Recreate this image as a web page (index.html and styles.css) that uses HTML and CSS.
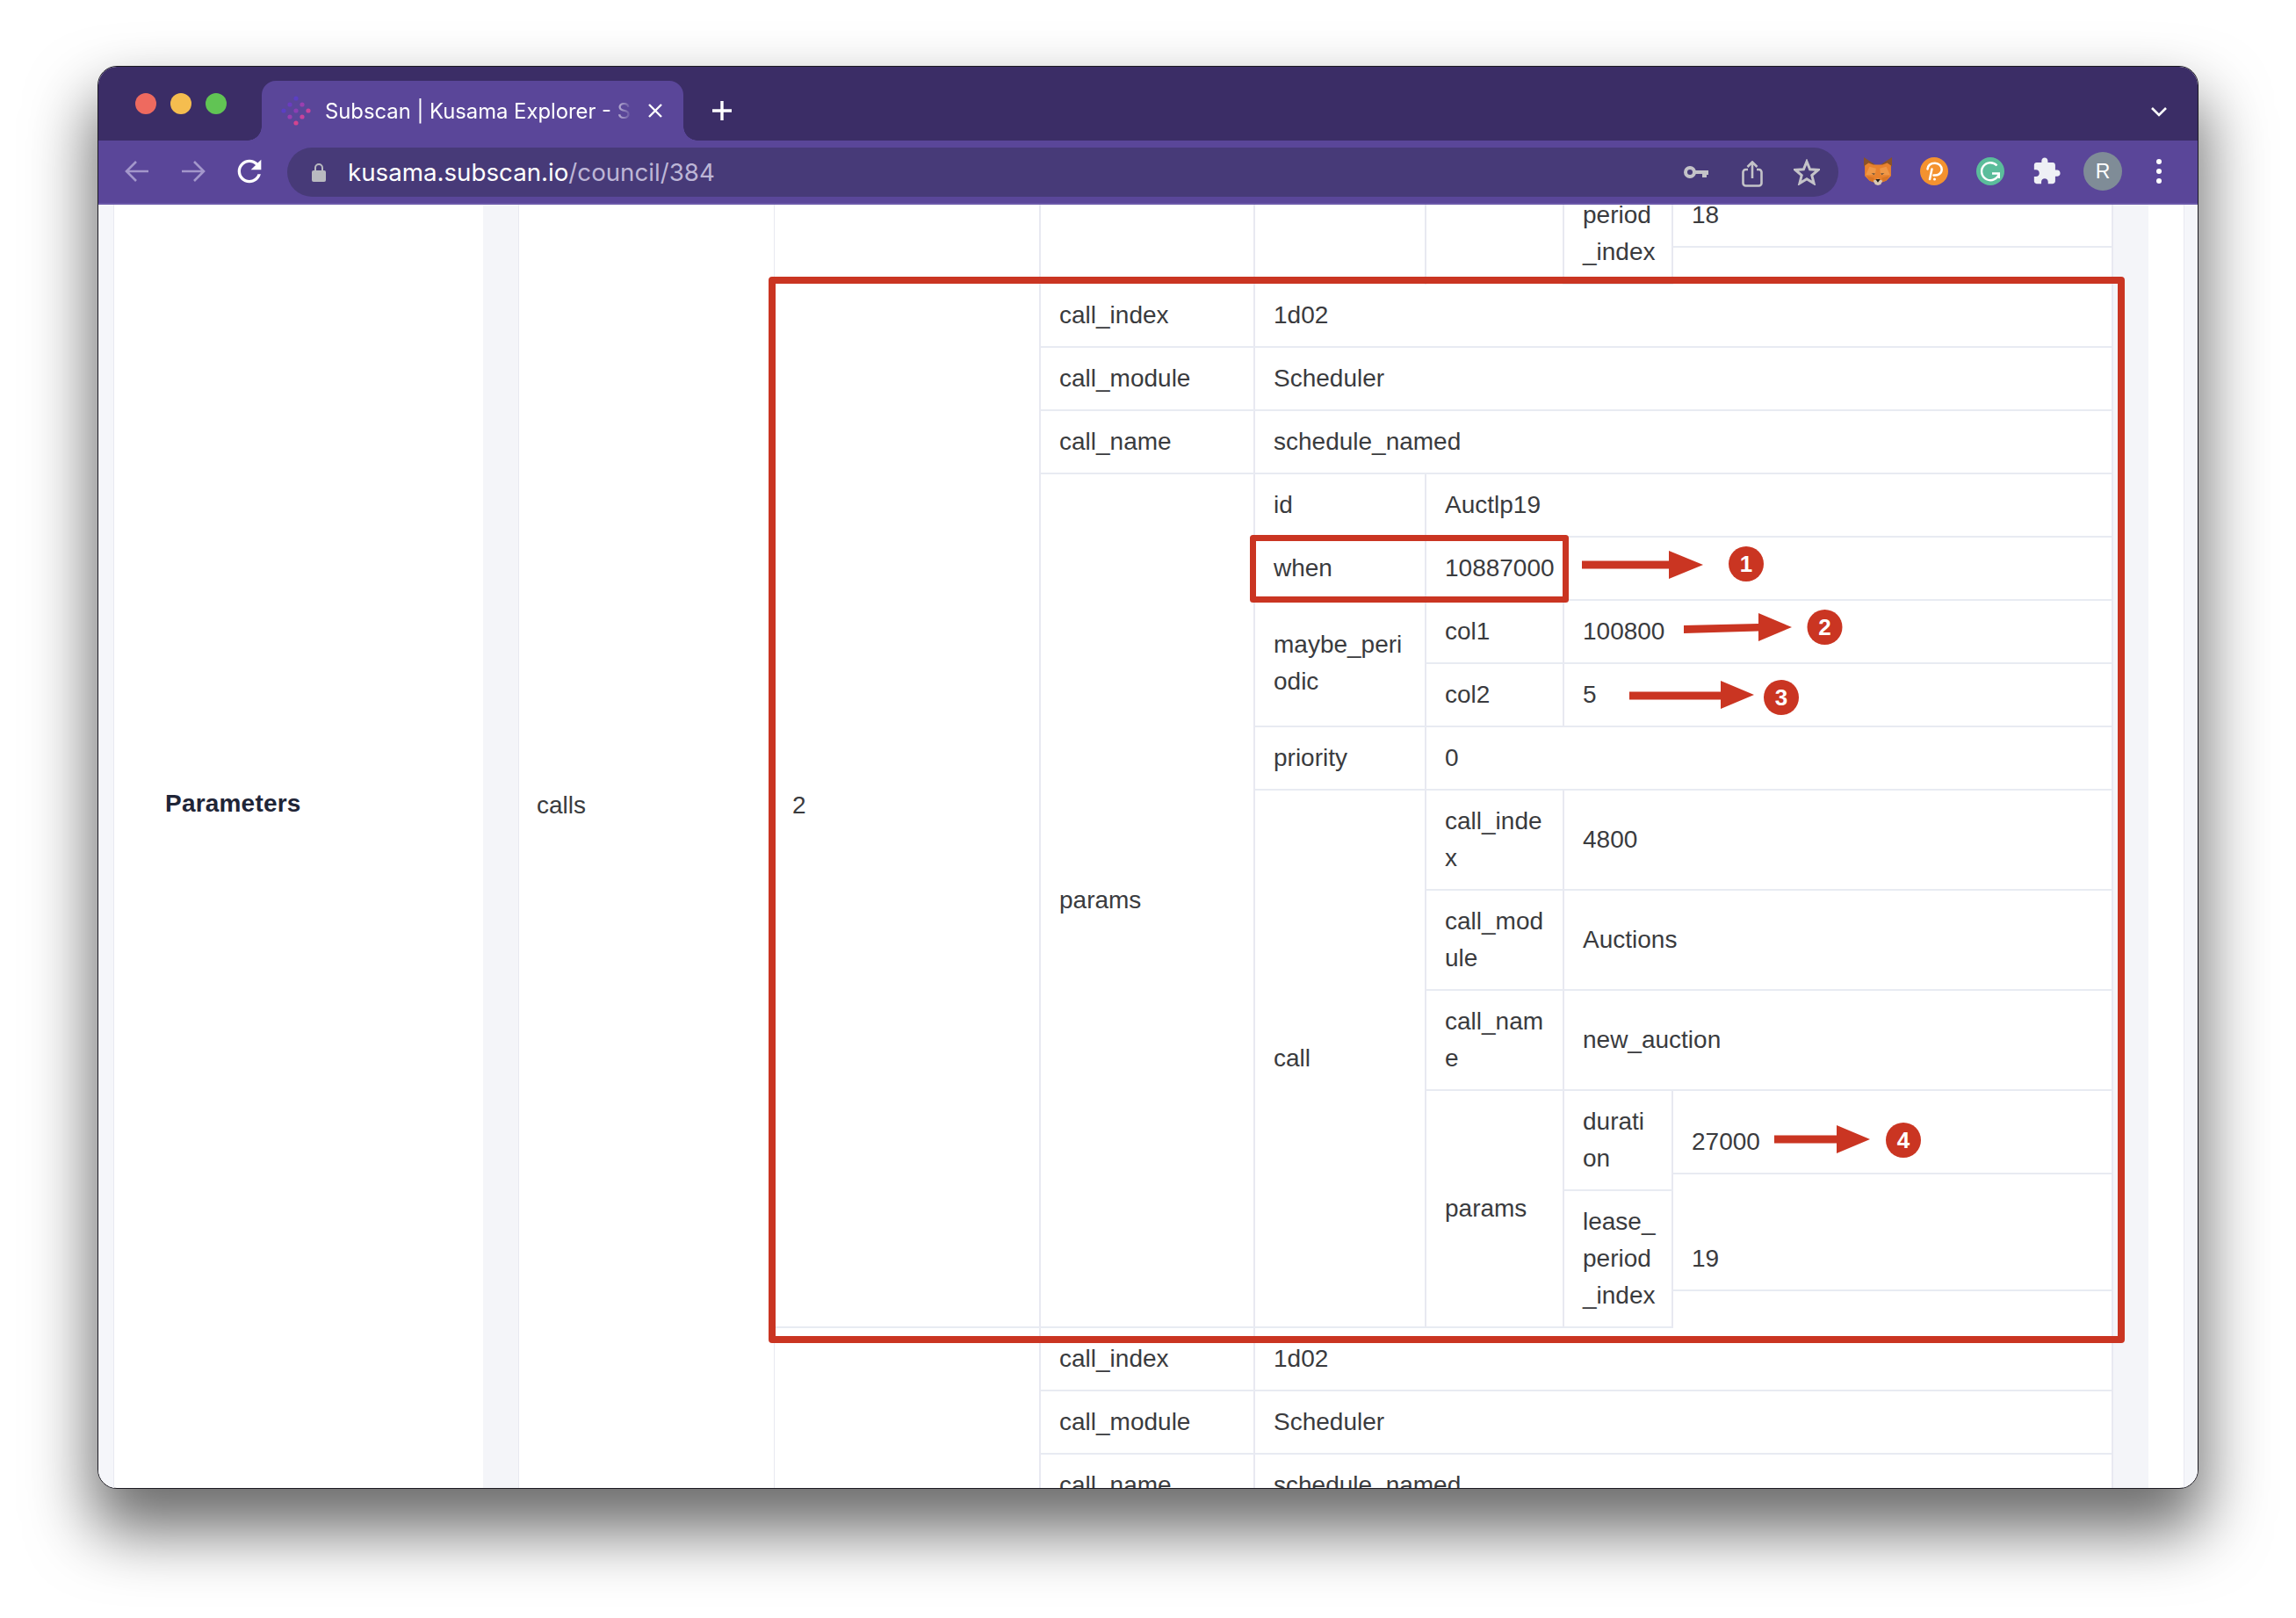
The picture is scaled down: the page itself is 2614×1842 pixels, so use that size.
FILE: index.html
```html
<!DOCTYPE html>
<html lang="en">
  <head>
    <meta charset="UTF-8" />
    <title>Subscan | Kusama Explorer</title>
    <link rel="stylesheet" href="styles.css">
  </head>
  <body>
    <div class="window">
      <header class="tabstrip">
        <div class="lights">
          <span class="light red"></span>
          <span class="light yellow"></span>
          <span class="light green"></span>
        </div>
        <div class="tab">
          <svg class="favicon" viewBox="0 0 34 34">
            <circle cx="17" cy="3" r="2.6" fill="#5b3fc4" />
            <circle cx="10" cy="10" r="2.6" fill="#6a3cc0" />
            <circle cx="24" cy="10" r="2.6" fill="#9a3fb0" />
            <circle cx="3" cy="17" r="2.6" fill="#5b3fc4" />
            <circle cx="17" cy="17" r="2.6" fill="#8a3fb4" />
            <circle cx="31" cy="17" r="2.6" fill="#c8439c" />
            <circle cx="10" cy="24" r="2.6" fill="#9a3fb0" />
            <circle cx="24" cy="24" r="2.6" fill="#c8439c" />
            <circle cx="17" cy="31" r="2.6" fill="#d2448f" />
          </svg>
          <span class="tab-title">Subscan | Kusama Explorer - Subscan</span>
          <svg class="tab-close" viewBox="0 0 18 18"><path d="M2 2 16 16M16 2 2 16" /></svg>
        </div>
        <svg class="new-tab" viewBox="0 0 24 24"><path d="M12 1V23M1 12H23" /></svg>
        <svg class="tab-menu" viewBox="0 0 20 12"><path d="M2 2 10 10 18 2" /></svg>
      </header>

      <div class="toolbar">
        <div class="slot">
          <svg class="nav dim" viewBox="0 0 28 28"><path d="M27 14H2M13 3 2 14 13 25" /></svg>
        </div>
        <div class="slot">
          <svg class="nav dim" viewBox="0 0 28 28"><path d="M1 14H26M15 3 26 14 15 25" /></svg>
        </div>
        <div class="slot">
          <svg class="reload" viewBox="0 0 24 24"><path d="M17.65 6.35C16.2 4.9 14.21 4 12 4c-4.42 0-7.99 3.58-7.99 8s3.57 8 7.99 8c3.73 0 6.84-2.55 7.73-6h-2.08c-.82 2.33-3.04 4-5.65 4-3.31 0-6-2.69-6-6s2.69-6 6-6c1.66 0 3.14.69 4.22 1.78L13 11h7V4l-2.35 2.35z" /></svg>
        </div>
        <div class="urlbar">
          <svg class="lock" viewBox="0 0 16 22">
            <path d="M4 10V6a4 4 0 0 1 8 0v4" fill="none" stroke="#b9bac0" stroke-width="2" />
            <rect x="0" y="9" width="16" height="13" rx="2" fill="#b9bac0" />
          </svg>
          <span class="url"><b>kusama.subscan.io</b>/council/384</span>
          <div class="url-icons">
            <svg class="key-icon" viewBox="0 0 28 14">
              <circle cx="7" cy="7" r="5" fill="none" stroke="#c4c3c8" stroke-width="4" />
              <path d="M12 5H28V10H26V13H21V9H12z" fill="#c4c3c8" />
            </svg>
            <svg class="share" viewBox="0 0 24 30">
              <path d="M7 10H4.500A3 3 0 0 0 1.500 13V25.500A3 3 0 0 0 4.500 28.500H19.500A3 3 0 0 0 22.500 25.500V13A3 3 0 0 0 19.500 10H17" />
              <path d="M12 20V2M6.500 7 12 1.500 17.500 7" />
            </svg>
            <svg class="star" viewBox="0 0 30 30"><path d="M15 3 18.600 11.700 28 12.400 20.800 18.500 23.100 27.700 15 22.700 6.900 27.700 9.200 18.500 2 12.400 11.400 11.700z" /></svg>
          </div>
        </div>
        <div class="extensions">
          <div class="slot">
            <svg class="ext" viewBox="0 0 30 30">
              <path d="M0 0 12 8 5 14 0 9z" fill="#8a5228" />
              <path d="M30 0 18 8 25 14 30 9z" fill="#8a5228" />
              <path d="M1 9 5 6 10 8H20L25 6 29 9 29 20 24 25 19 27H11L6 25 1 20z" fill="#e8822e" />
              <path d="M6 10 13 12 12 19 2 19z" fill="#ef9848" />
              <path d="M24 10 17 12 18 19 28 19z" fill="#ef9848" />
              <path d="M3 20 11 22 10 26 6 25z" fill="#d87526" />
              <path d="M27 20 19 22 20 26 24 25z" fill="#d87526" />
              <path d="M10 25 15 23 20 25 18 29 15 30 12 29z" fill="#d9c7b4" />
              <path d="M12.500 23.500H17.500L15 27z" fill="#1d1a18" />
              <path d="M8 17 12 17 11 19z" fill="#6b5138" />
              <path d="M22 17 18 17 19 19z" fill="#6b5138" />
            </svg>
          </div>
          <div class="slot">
            <svg class="ext" viewBox="0 0 32 32">
              <circle cx="16" cy="16" r="16" fill="#f4922f" />
              <path d="M8.500 13.500C9 9 12.500 6.700 17 6.700C21.500 6.700 24.700 10 24.700 14C24.700 18.500 20.500 21 15.500 20.500M13.500 13.500 11 25" fill="none" stroke="#fff" stroke-width="2.500" stroke-linecap="round" />
              <circle cx="16.500" cy="25" r="1.500" fill="#fff" />
            </svg>
          </div>
          <div class="slot">
            <svg class="ext" viewBox="0 0 32 32">
              <circle cx="16" cy="16" r="16" fill="#5bbd9b" />
              <path d="M23.500 9.500A10 10 0 1 0 25.800 18.500" fill="none" stroke="#fff" stroke-width="2.400" />
              <path d="M18 18.500H25.800V24" fill="none" stroke="#fff" stroke-width="2.400" />
            </svg>
          </div>
          <div class="slot">
            <svg class="puzzle" viewBox="0 0 24 24"><path d="M20.500 11H19V7c0-1.100-.9-2-2-2h-4V3.500C13 2.120 11.880 1 10.500 1S8 2.120 8 3.500V5H4c-1.100 0-1.990.9-1.990 2v3.800H3.500c1.490 0 2.700 1.210 2.700 2.700s-1.210 2.700-2.700 2.700H2V20c0 1.100.9 2 2 2h3.800v-1.500c0-1.490 1.210-2.700 2.700-2.700 1.490 0 2.700 1.210 2.700 2.700V22H17c1.100 0 2-.9 2-2v-4h1.500c1.380 0 2.500-1.120 2.500-2.500S21.880 11 20.500 11z" /></svg>
          </div>
          <div class="slot"><span class="avatar">R</span></div>
          <div class="slot">
            <svg class="dots" viewBox="0 0 8 30">
              <circle cx="4" cy="4" r="3" />
              <circle cx="4" cy="15" r="3" />
              <circle cx="4" cy="26" r="3" />
            </svg>
          </div>
        </div>
      </div>

      <main class="content">
        <div class="gutter"></div>
        <div class="label-col">Parameters</div>
        <div class="band"></div>
        <div class="calls-col">calls</div>

        <div class="calls-body">
          <div class="call call-top">
            <div class="key c1"></div>
            <div class="key ka"></div>
            <div class="key kb"></div>
            <div class="key kc"></div>
            <div class="split">
              <div class="split-keys">
                <div class="key">lease_<br />period<br />_index</div>
              </div>
              <div class="split-vals">
                <div class="val v-lease">18</div>
              </div>
            </div>
          </div>

          <div class="call">
            <div class="key c1">2</div>
            <div class="nest">
              <div class="row"><div class="key ka">call_index</div><div class="val">1d02</div></div>
              <div class="row"><div class="key ka">call_module</div><div class="val">Scheduler</div></div>
              <div class="row"><div class="key ka">call_name</div><div class="val">schedule_named</div></div>
              <div class="row">
                <div class="key ka">params</div>
                <div class="nest">
                  <div class="row"><div class="key kb">id</div><div class="val">Auctlp19</div></div>
                  <div class="row"><div class="key kb">when</div><div class="val">10887000</div></div>
                  <div class="row">
                    <div class="key kb">maybe_peri<br />odic</div>
                    <div class="nest">
                      <div class="row"><div class="key kc">col1</div><div class="val">100800</div></div>
                      <div class="row"><div class="key kc">col2</div><div class="val">5</div></div>
                    </div>
                  </div>
                  <div class="row"><div class="key kb">priority</div><div class="val">0</div></div>
                  <div class="row">
                    <div class="key kb">call</div>
                    <div class="nest">
                      <div class="row"><div class="key kc">call_inde<br />x</div><div class="val">4800</div></div>
                      <div class="row"><div class="key kc">call_mod<br />ule</div><div class="val">Auctions</div></div>
                      <div class="row"><div class="key kc">call_nam<br />e</div><div class="val">new_auction</div></div>
                      <div class="row">
                        <div class="key kc">params</div>
                        <div class="split">
                          <div class="split-keys">
                            <div class="key">durati<br />on</div>
                            <div class="key">lease_<br />period<br />_index</div>
                          </div>
                          <div class="split-vals">
                            <div class="val v-dur">27000</div>
                            <div class="val v-lease">19</div>
                          </div>
                        </div>
                      </div>
                    </div>
                  </div>
                </div>
              </div>
            </div>
          </div>

          <div class="call">
            <div class="key c1"></div>
            <div class="nest">
              <div class="row"><div class="key ka">call_index</div><div class="val">1d02</div></div>
              <div class="row"><div class="key ka">call_module</div><div class="val">Scheduler</div></div>
              <div class="row"><div class="key ka">call_name</div><div class="val">schedule_named</div></div>
            </div>
          </div>
        </div>

        <div class="band"></div>
        <div class="spare"></div>
        <div class="gutter end"></div>
      </main>
    </div>

    <svg class="notes" viewBox="0 0 2614 1842">
      <rect class="box" x="879" y="319" width="1536" height="1206" />
      <rect class="box thin" x="1426.500" y="612.500" width="356" height="70" />

      <path class="mark" d="M1801 638.500H1900V627L1939 643 1900 659V647.500H1801z" />
      <circle class="mark" cx="1988" cy="642" r="20" />
      <text class="num" x="1988" y="651">1</text>

      <path class="mark" d="M1917 712V721L2002 718.500V730L2040 714 2002 698V710z" />
      <circle class="mark" cx="2077.500" cy="714" r="20" />
      <text class="num" x="2077.500" y="723">2</text>

      <path class="mark" d="M1855 787.500H1959V775L1997 791 1959 807V796.500H1855z" />
      <circle class="mark" cx="2028" cy="794" r="20" />
      <text class="num" x="2028" y="803">3</text>

      <path class="mark" d="M2020 1292.500H2091V1281L2129 1297 2091 1313V1301.500H2020z" />
      <circle class="mark" cx="2167" cy="1298" r="20" />
      <text class="num" x="2167" y="1307">4</text>
    </svg>
  </body>
</html>
```

FILE: styles.css
```css
html, body {
  margin: 0;
  height: 100%;
}

body {
  position: relative;
  width: 2614px;
  height: 1842px;
  overflow: hidden;
  background: #fff;
  padding: 75px 0 0 111px;
  box-sizing: border-box;
  font-family: "Liberation Sans", Arial, sans-serif;
}

.window {
  width: 2392px;
  height: 1620px;
  box-sizing: border-box;
  border: 1px solid #1c1a22;
  border-radius: 22px;
  overflow: hidden;
  display: flex;
  flex-direction: column;
  background: #fff;
  box-shadow: 0 42px 72px 6px rgba(0, 0, 0, 0.58);
}

/* browser chrome */
.tabstrip {
  flex: none;
  height: 84px;
  background: #3b2d66;
  display: flex;
  align-items: flex-end;
  position: relative;
}

.lights {
  display: flex;
  gap: 16px;
  padding: 0 0 30px 42px;
  width: 186px;
  box-sizing: border-box;
  align-self: flex-end;
}

.light {
  width: 24px;
  height: 24px;
  border-radius: 50%;
}

.red { background: #ee6a5f; }
.yellow { background: #f5bd4f; }
.green { background: #61c454; }

.tab {
  position: relative;
  width: 480px;
  height: 68px;
  background: #5a4699;
  border-radius: 16px 16px 0 0;
  display: flex;
  align-items: center;
  padding: 0 24px 0 22px;
  box-sizing: border-box;
  color: #fff;
}

.tab::before,
.tab::after {
  content: "";
  position: absolute;
  bottom: 0;
  width: 16px;
  height: 16px;
}

.tab::before {
  left: -16px;
  background: radial-gradient(circle at 0 0, transparent 15.5px, #5a4699 16px);
}

.tab::after {
  right: -16px;
  background: radial-gradient(circle at 100% 0, transparent 15.5px, #5a4699 16px);
}

.favicon {
  width: 34px;
  height: 34px;
  flex: none;
}

.tab-title {
  margin-left: 16px;
  width: 350px;
  flex: none;
  white-space: nowrap;
  overflow: hidden;
  font-family: Inter, "Liberation Sans", sans-serif;
  font-size: 23.8px;
  -webkit-mask-image: linear-gradient(to right, #000 92%, transparent 100%);
  mask-image: linear-gradient(to right, #000 92%, transparent 100%);
}

.tab-close {
  width: 18px;
  height: 18px;
  margin-left: 17px;
  flex: none;
  fill: none;
  stroke: #fff;
  stroke-width: 2.4;
}

.new-tab {
  width: 24px;
  height: 24px;
  margin: 0 0 22px 32px;
  fill: none;
  stroke: #fff;
  stroke-width: 3.4;
}

.tab-menu {
  position: absolute;
  right: 34px;
  top: 45px;
  width: 20px;
  height: 12px;
  fill: none;
  stroke: #fff;
  stroke-width: 2.6;
}

.toolbar {
  flex: none;
  height: 73px;
  background: #5a4699;
  border-bottom: 2px solid #6a58a8;
  box-sizing: border-box;
  display: flex;
  padding: 8px 0 9px 12px;
}

.slot {
  width: 64px;
  flex: none;
  display: flex;
  align-items: center;
  justify-content: center;
}

.nav {
  width: 28px;
  height: 28px;
  fill: none;
  stroke: #a397cb;
  stroke-width: 2.6;
}

.reload {
  width: 40px;
  height: 40px;
  fill: #fff;
}

.urlbar {
  width: 1766px;
  height: 56px;
  margin-left: 11px;
  border-radius: 28px;
  background: #473a78;
  display: flex;
  align-items: center;
  padding-left: 28px;
  box-sizing: border-box;
}

.lock {
  width: 16px;
  height: 22px;
}

.url {
  margin-left: 25px;
  font-family: Inter, "Liberation Sans", sans-serif;
  font-size: 27.7px;
  color: #bdb6d6;
  flex: 1;
}

.url b {
  font-weight: 400;
  color: #fff;
}

.url-icons {
  display: flex;
  align-items: center;
  width: 176px;
  height: 100%;
}

.key-icon {
  width: 28px;
  height: 14px;
}

.share {
  width: 24px;
  height: 30px;
  margin: 4px 0 0 38px;
  fill: none;
  stroke: #c4c3c8;
  stroke-width: 2.6;
}

.star {
  width: 30px;
  height: 30px;
  margin-left: 35px;
  fill: none;
  stroke: #c4c3c8;
  stroke-width: 3;
}

.extensions {
  display: flex;
}

.extensions .slot:first-child {
  margin-left: 13px;
}

.ext {
  width: 32px;
  height: 32px;
}

.puzzle {
  width: 34px;
  height: 34px;
  fill: #eef0f5;
}

.avatar {
  width: 44px;
  height: 44px;
  border-radius: 50%;
  background: #7f8c97;
  color: #fff;
  font-size: 23px;
  display: flex;
  align-items: center;
  justify-content: center;
}

.dots {
  width: 8px;
  height: 30px;
  fill: #fff;
}

/* page */
.content {
  flex: 1;
  min-height: 0;
  display: flex;
  overflow: hidden;
  font-size: 28px;
  line-height: 42px;
  color: #3a3b3e;
}

.gutter {
  flex: none;
  width: 17px;
  background: #f5f6fa;
  border-right: 1px solid #e8e9f1;
}

.gutter.end {
  width: 15px;
  border-right: 0;
  border-left: 1px solid #e8e9f1;
}

.band {
  flex: none;
  width: 40px;
  background: #f4f5f9;
}

.spare {
  flex: none;
  width: 40px;
}

.label-col {
  flex: none;
  width: 420px;
  box-sizing: border-box;
  padding: 0 0 98px 58px;
  display: flex;
  align-items: center;
  font-weight: 700;
  letter-spacing: 0.2px;
  color: #1f2537;
}

.calls-col {
  flex: none;
  width: 291px;
  box-sizing: border-box;
  border-left: 1px solid #e8e9f1;
  padding: 0 0 94px 20px;
  display: flex;
  align-items: center;
}

.calls-body {
  flex: none;
  width: 1525px;
  box-sizing: border-box;
  border-left: 1px solid #e8e9f1;
  border-right: 2px solid #e8e9f1;
}

.call {
  display: flex;
}

.call-top {
  height: 91px;
  overflow: hidden;
  align-items: flex-end;
}

.nest {
  flex: 1;
  min-width: 0;
  display: flex;
  flex-direction: column;
}

.row {
  display: flex;
}

.key,
.val {
  box-sizing: border-box;
  padding: 14px 20px 14px 21px;
  border-bottom: 2px solid #e8ebf2;
  display: flex;
  align-items: center;
}

.key {
  flex: none;
  border-right: 2px solid #e8e9f1;
}

.val {
  flex: 1;
  min-width: 0;
}

.call-top > .key {
  height: 156px;
  border-bottom: 0;
}

.c1 { width: 303px; padding-left: 20px; }
.ka { width: 244px; }
.kb { width: 195px; }
.kc { width: 157px; }

.split {
  flex: 1;
  min-width: 0;
  display: flex;
}

.split-keys {
  flex: none;
  width: 124px;
  display: flex;
  flex-direction: column;
  justify-content: flex-end;
}

.split-keys .key {
  display: block;
}

.split-keys .key:first-child:not(:last-child) {
  flex: none;
}

.split-vals {
  flex: 1;
  padding-bottom: 42px;
  display: flex;
  flex-direction: column;
  justify-content: flex-end;
}

.split-vals .val {
  flex: none;
  align-items: flex-end;
}

.v-dur { height: 94px; }
.v-lease { height: 133px; }

/* red annotations drawn over the table */
.notes {
  position: absolute;
  left: 0;
  top: 0;
  width: 2614px;
  height: 1842px;
  pointer-events: none;
}

.box {
  fill: none;
  stroke: #ca3522;
  stroke-width: 8;
  stroke-linejoin: round;
}

.box.thin {
  stroke-width: 7;
}

.mark {
  fill: #ca3522;
}

.num {
  fill: #fff;
  font-family: "Liberation Sans", Arial, sans-serif;
  font-size: 26px;
  font-weight: 700;
  text-anchor: middle;
}
```
